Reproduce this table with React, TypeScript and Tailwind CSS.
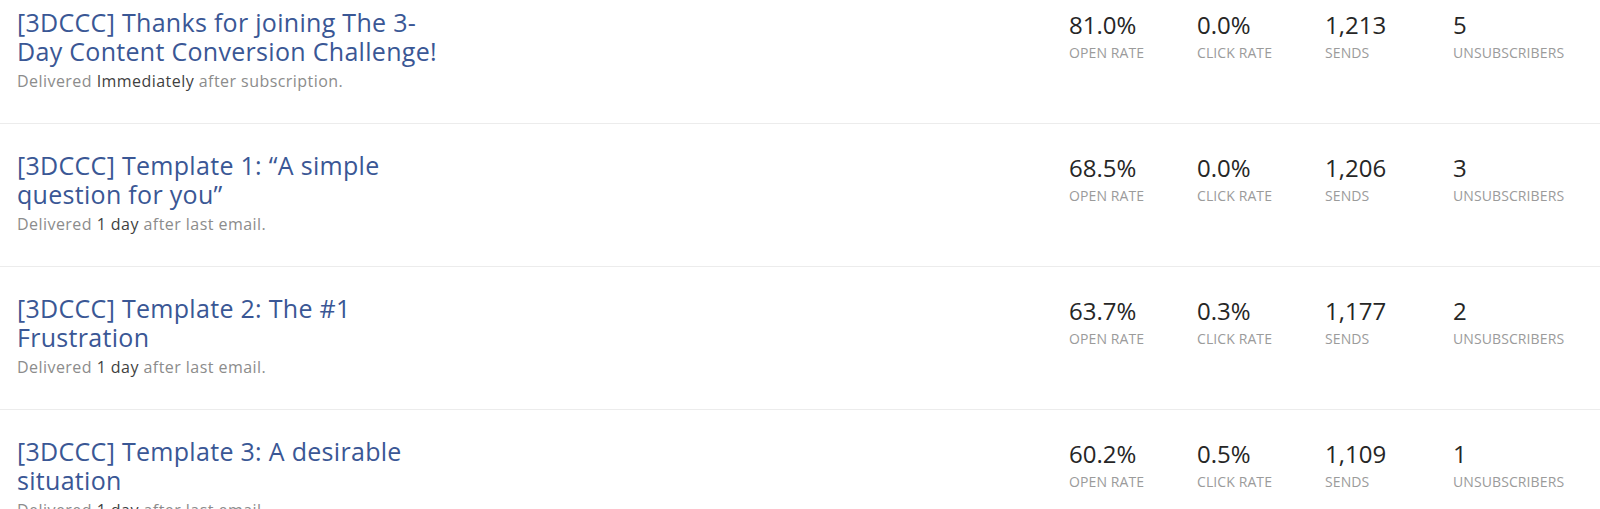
import React from 'react';

type EmailRow = {
    title: string;
    delay: string;
    trigger: string;
    openRate: string;
    clickRate: string;
    sends: string;
    unsubs: string;
};

const rows: EmailRow[] = [
    { title: '[3DCCC] Thanks for joining The 3-Day Content Conversion Challenge!', delay: 'Immediately', trigger: 'after subscription.', openRate: '81.0%', clickRate: '0.0%', sends: '1,213', unsubs: '5' },
    { title: '[3DCCC] Template 1: \u201CA simple question for you\u201D', delay: '1 day', trigger: 'after last email.', openRate: '68.5%', clickRate: '0.0%', sends: '1,206', unsubs: '3' },
    { title: '[3DCCC] Template 2: The #1 Frustration', delay: '1 day', trigger: 'after last email.', openRate: '63.7%', clickRate: '0.3%', sends: '1,177', unsubs: '2' },
    { title: '[3DCCC] Template 3: A desirable situation', delay: '1 day', trigger: 'after last email.', openRate: '60.2%', clickRate: '0.5%', sends: '1,109', unsubs: '1' },
];

const Stat: React.FC<{ value: string; label: string }> = ({ value, label }) => (
    <div className="w-[128px]">
        <div className="text-[24px] leading-[28px] text-[#262626]">{value}</div>
        <div className="mt-[5px] text-[14px] leading-[18px] tracking-[0.1px] uppercase text-[#9b9b9b]">{label}</div>
    </div>
);

export default function App() {
    return (
        <div className="h-[509px] overflow-hidden bg-white" style={{ fontFamily: '"Open Sans", "Noto Sans", sans-serif' }}>
            <div className="-mt-[19px]">
                {rows.map((row, i) => (
                    <div key={i} className="flex justify-between border-b border-[#ececec] pl-[17px] pr-[19px] pt-[27px] pb-[32px]">
                        <div className="w-[430px]">
                            <div className="text-[25px] leading-[29px] tracking-[0.3px] text-[#3a5795]">{row.title}</div>
                            <div className="mt-[5px] text-[16px] leading-5 tracking-[0.45px] text-[#8c8c8c]">
                                Delivered <span className="text-[#3f3f3f]">{row.delay}</span> {row.trigger}
                            </div>
                        </div>
                        {/* stats */}
                        <div className="mt-[3px] flex">
                            <Stat value={row.openRate} label="Open Rate" />
                            <Stat value={row.clickRate} label="Click Rate" />
                            <Stat value={row.sends} label="Sends" />
                            <Stat value={row.unsubs} label="Unsubscribers" />
                        </div>
                    </div>
                ))}
            </div>
        </div>
    );
}
